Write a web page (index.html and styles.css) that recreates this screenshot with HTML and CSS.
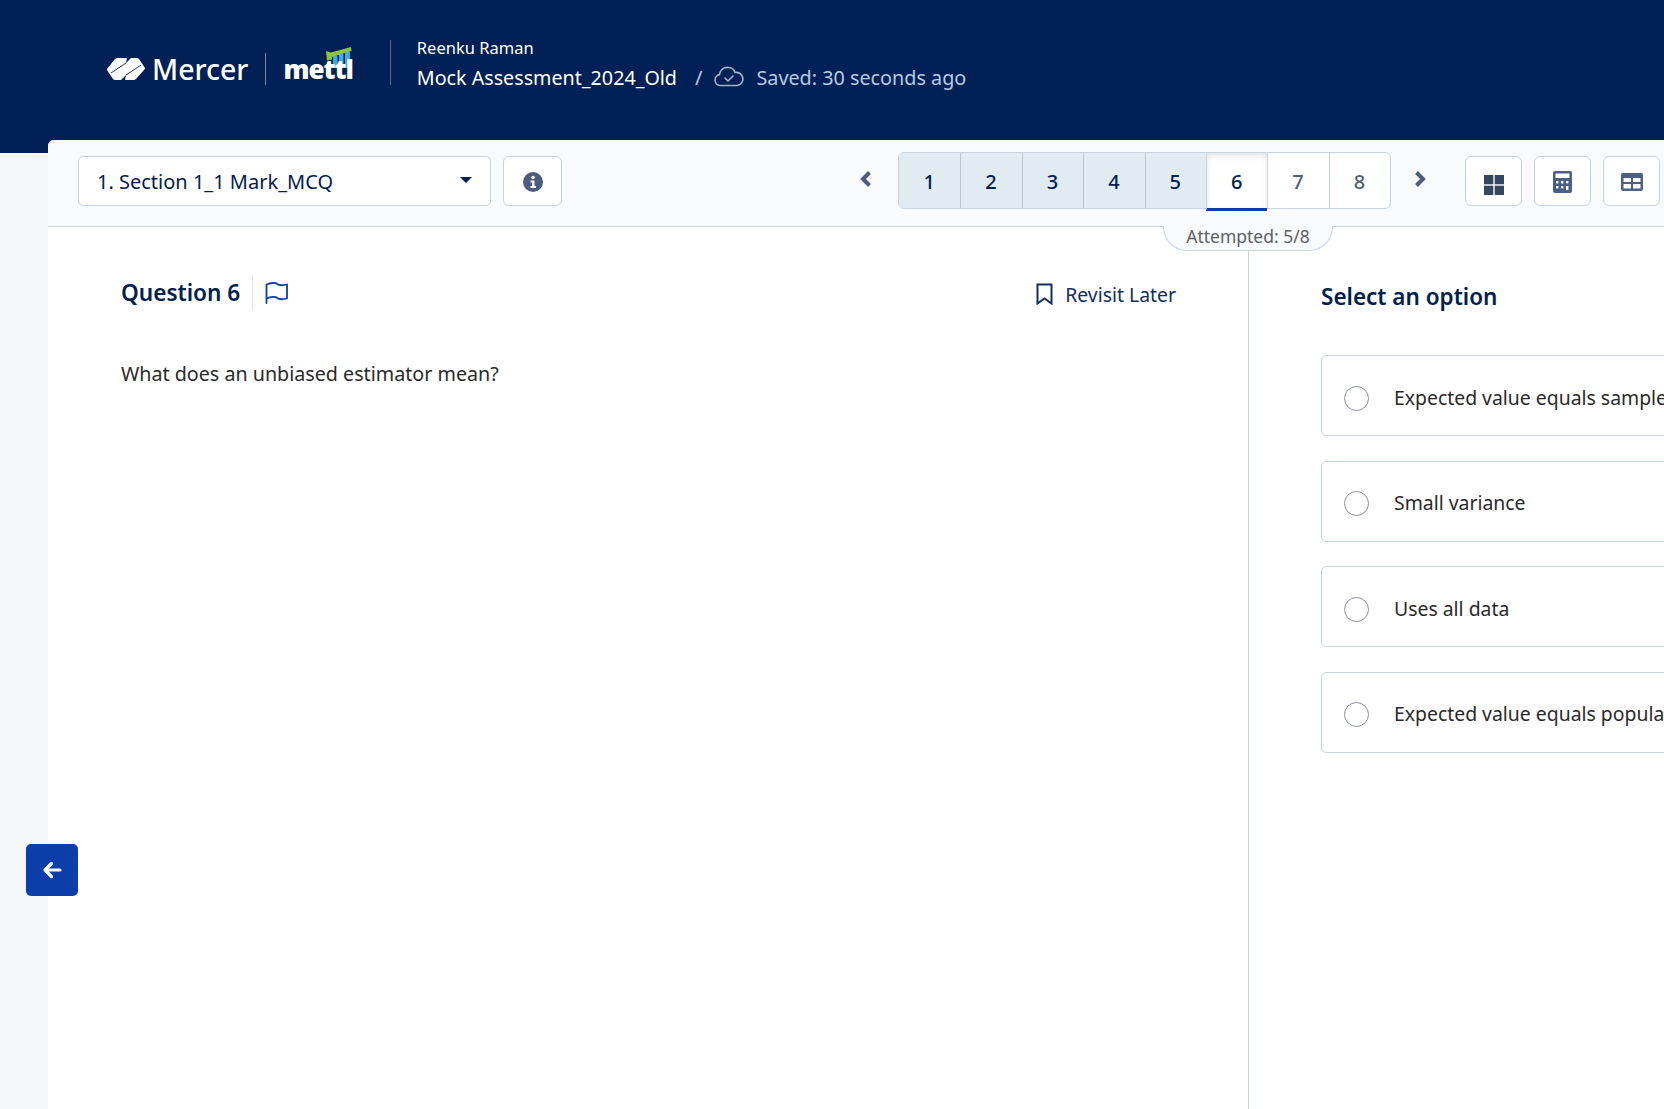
FILE: index.html
```html
<!DOCTYPE html>
<html lang="en">
<head>
    <meta charset="UTF-8">
    <meta name="viewport" content="width=device-width, initial-scale=1.0">
    <title>Mock Assessment_2024_Old</title>
    <link rel="stylesheet" href="styles.css">
</head>
<body>
    <header class="topbar">
        <div class="brand">
            <svg class="mercer-mark" viewBox="0 0 38 22" width="38" height="22">
                <path fill="#fff" d="M0 11 8 1Q9 0 11 0H20L19 5 24 0H30Q31 0 32 1L38 10Q38 11 37 12L29 21Q28 22 26 22H18L19 17 14 22H8Q7 22 6 21L0 12Z"/>
                <path fill="none" stroke="#002056" stroke-width="0.9" d="M4 15 19 5M34 7 19 17"/>
            </svg>
            <span class="mercer-name">Mercer</span>
            <span class="brand-sep"></span>
            <span class="mettl">
                <svg class="mettl-bars" viewBox="0 0 26 21" width="26" height="21">
                    <rect x="7" y="9" width="4.500" height="12" fill="#3fa9e0"/>
                    <rect x="13" y="7" width="4.500" height="14" fill="#3fa9e0"/>
                    <rect x="19" y="5" width="5" height="16" fill="#3fa9e0"/>
                    <path fill="#8cc540" d="M0 4 5 5.500 25 0 25.500 4 6 10 6 12.500 1 13.500Z"/>
                </svg>
                <span class="mettl-name">mettl</span>
            </span>
        </div>
        <div class="test-info">
            <div class="user-name">Reenku Raman</div>
            <div class="test-line">
                <span class="test-name">Mock Assessment_2024_Old</span>
                <span class="slash">/</span>
                <svg class="cloud" viewBox="0 0 30 22" width="30" height="22" fill="none" stroke="#a3b5c9" stroke-width="1.6" stroke-linecap="round" stroke-linejoin="round">
                    <path d="M7 20.500H6.500A5.500 5.500 0 0 1 5.500 9.600 8 8 0 0 1 15 2.500 7 7 0 0 1 21 7.500 6.500 6.500 0 0 1 23.500 20.500Z"/>
                    <path d="m11 13 3 3 5-5"/>
                </svg>
                <span class="saved">Saved: 30 seconds ago</span>
            </div>
        </div>
    </header>

    <main class="card">
        <div class="toolbar">
            <div class="section-select">
                <span>1. Section 1_1 Mark_MCQ</span>
                <span class="caret"></span>
            </div>
            <button class="icon-btn info-btn">
                <svg viewBox="0 0 20 20" width="20" height="20">
                    <circle cx="10" cy="10" r="10" fill="#4c5c7d"/>
                    <circle cx="10" cy="5.500" r="1.800" fill="#fff"/>
                    <path fill="#fff" d="M7.500 8.500H11.500V14H13V16H7.500V14H9V10.500H7.500Z"/>
                </svg>
            </button>
            <div class="pager-wrap">
                <svg class="chevron" viewBox="0 0 12 18" width="12" height="18"><path d="M9.500 2.500 3 9l6.500 6.500" fill="none" stroke="#4c5c7d" stroke-width="4"/></svg>
                <div class="pager">
                    <span class="page done">1</span>
                    <span class="page done">2</span>
                    <span class="page done">3</span>
                    <span class="page done">4</span>
                    <span class="page done">5</span>
                    <span class="page current">6</span>
                    <span class="page">7</span>
                    <span class="page">8</span>
                </div>
                <svg class="chevron" viewBox="0 0 12 18" width="12" height="18"><path d="M2.500 2.500 9 9l-6.500 6.500" fill="none" stroke="#4c5c7d" stroke-width="4"/></svg>
            </div>
            <div class="tools">
                <button class="icon-btn tool-btn grid-btn">
                    <svg viewBox="0 0 20 20" width="20" height="20" fill="#33475f">
                        <rect x="0" y="0" width="9.300" height="9.300"/>
                        <rect x="10.700" y="0" width="9.300" height="9.300"/>
                        <rect x="0" y="10.700" width="9.300" height="9.300"/>
                        <rect x="10.700" y="10.700" width="9.300" height="9.300"/>
                    </svg>
                </button>
                <button class="icon-btn tool-btn">
                    <svg viewBox="0 0 19 22" width="19" height="22">
                        <rect width="19" height="22" rx="2" fill="#4a5f85"/>
                        <rect x="2.500" y="2.500" width="14" height="4.500" fill="#fff"/>
                        <g fill="#fff">
                            <rect x="3" y="10" width="2.400" height="2.400"/>
                            <rect x="8" y="10" width="2.400" height="2.400"/>
                            <rect x="13" y="10" width="2.400" height="2.400"/>
                            <rect x="3" y="15" width="2.400" height="2.400"/>
                            <rect x="8" y="15" width="2.400" height="2.400"/>
                            <rect x="13" y="15" width="2.400" height="4"/>
                        </g>
                    </svg>
                </button>
                <button class="icon-btn tool-btn">
                    <svg viewBox="0 0 22 18" width="22" height="18">
                        <rect width="22" height="18" rx="2" fill="#4a5f85"/>
                        <rect x="2.500" y="5" width="7.500" height="4" fill="#fff"/>
                        <rect x="12" y="5" width="7.500" height="4" fill="#fff"/>
                        <rect x="2.500" y="11" width="7.500" height="4.500" fill="#fff"/>
                        <rect x="12" y="11" width="7.500" height="4.500" fill="#fff"/>
                    </svg>
                </button>
            </div>
            <div class="attempted">Attempted: 5/8</div>
        </div>

        <div class="content">
            <section class="question">
                <div class="question-head">
                    <h2 class="question-title">Question 6</h2>
                    <span class="head-sep"></span>
                    <svg class="flag" viewBox="0 0 23 22" width="23" height="22" fill="none" stroke="#0b3ea8" stroke-width="1.800" stroke-linejoin="round" stroke-linecap="round">
                        <path d="M1.500 21V2.500C7 .5 11 .5 12 2c2 1.500 6 1.500 10 .5v14c-4 1-8 1-10-.5-1-1.500-6-1.500-10.500.5"/>
                    </svg>
                    <div class="revisit">
                        <svg viewBox="0 0 17 22" width="17" height="22" fill="none" stroke="#12305f" stroke-width="2">
                            <path d="M1.500 1.500h14v19l-7-5-7 5Z"/>
                        </svg>
                        <span>Revisit Later</span>
                    </div>
                </div>
                <p class="question-text">What does an unbiased estimator mean?</p>
            </section>

            <section class="answers">
                <h3 class="answers-title">Select an option</h3>
                <div class="option"><span class="radio"></span><span>Expected value equals sample mean</span></div>
                <div class="option"><span class="radio"></span><span>Small variance</span></div>
                <div class="option"><span class="radio"></span><span>Uses all data</span></div>
                <div class="option"><span class="radio"></span><span>Expected value equals population mean</span></div>
            </section>
        </div>
    </main>

    <button class="side-toggle">
        <svg viewBox="0 0 20 18" width="20" height="18" fill="none" stroke="#fff" stroke-width="3.200" stroke-linecap="round" stroke-linejoin="round">
            <path d="M18 9H3M9.500 2.500 3 9l6.500 6.500"/>
        </svg>
    </button>
</body>
</html>
```

FILE: styles.css
```css
* {
    box-sizing: border-box;
}
html, body {
    height: 100%;
}
body {
    margin: 0;
    overflow: hidden;
    background-color: #f4f6f8;
    color: #002050;
    font-family: "Noto Sans", sans-serif;
    position: relative;
}
button {
    font: inherit;
    cursor: pointer;
}

/* top bar */
.topbar {
    height: 153px;
    padding: 37px 0 0 107px;
    display: flex;
    align-items: flex-start;
    background-color: #002056;
    color: white;
}
.brand {
    height: 48px;
    display: flex;
    align-items: center;
    padding-top: 16px;
}
.mercer-mark {
    margin-right: 7px;
}
.mercer-name {
    font-size: 28.500px;
    font-weight: 500;
    line-height: 30px;
}
.brand-sep {
    width: 1px;
    height: 32px;
    margin: 0 17px;
    background-color: #74869f;
}
.mettl {
    position: relative;
    display: block;
}
.mettl-name {
    position: relative;
    font-family: "Open Sans", sans-serif;
    font-size: 26px;
    font-weight: 800;
    letter-spacing: -1px;
    line-height: 28px;
    display: block;
}
.mettl-bars {
    position: absolute;
    right: 1px;
    top: -8px;
}
.test-info {
    margin: 3px 0 0 37px;
    padding-left: 26px;
    height: 45px;
    border-left: 1px solid #566a88;
}
.user-name {
    font-size: 16.500px;
    line-height: 22px;
    margin-top: -3px;
}
.test-line {
    display: flex;
    align-items: center;
    height: 30px;
    margin-top: 3px;
    white-space: nowrap;
}
.test-name {
    font-size: 19.700px;
}
.slash {
    font-size: 20px;
    color: #b5cbe4;
    margin: 0 12px 0 18px;
}
.cloud {
    margin-right: 12px;
    margin-top: -3px;
}
.saved {
    font-size: 19.800px;
    color: #b5cbe4;
}

/* white card */
.card {
    position: absolute;
    top: 140px;
    left: 48px;
    width: 1700px;
    bottom: 0;
    background-color: white;
    border-top-left-radius: 6px;
    display: flex;
    flex-direction: column;
}
.toolbar {
    height: 87px;
    flex-shrink: 0;
    padding: 12px 0 0 30px;
    display: flex;
    align-items: flex-start;
    background-color: #f8fafc;
    border-bottom: 1px solid #c8d4df;
    border-top-left-radius: 6px;
    position: relative;
}
.section-select {
    width: 413px;
    height: 50px;
    margin-top: 4px;
    padding: 1px 18px 0 18px;
    display: flex;
    align-items: center;
    justify-content: space-between;
    background-color: white;
    border: 1px solid #c8d4df;
    border-radius: 5px;
    font-size: 20px;
}
.caret {
    width: 0;
    height: 0;
    margin-top: -4px;
    border-left: 6px solid transparent;
    border-right: 6px solid transparent;
    border-top: 6px solid #002050;
}
.icon-btn {
    padding: 0;
    display: flex;
    align-items: center;
    justify-content: center;
    background-color: white;
    border: 1px solid #c8d4df;
    border-radius: 6px;
}
.info-btn {
    width: 59px;
    height: 50px;
    margin: 4px 0 0 12px;
    padding-top: 1px;
}
.pager-wrap {
    margin-left: 298px;
    display: flex;
    align-items: flex-start;
}
.chevron {
    margin-top: 18px;
}
.pager {
    display: flex;
    height: 57px;
    margin: 0 23px 0 26px;
    background-color: white;
    border: 1px solid #c8d4df;
    border-radius: 6px;
}
.page {
    width: 61.400px;
    padding: 1px 1px 0 0;
    display: flex;
    align-items: center;
    justify-content: center;
    border-left: 1px solid #c8d4df;
    font-size: 20px;
    font-weight: 500;
    color: #4c5c7d;
}
.page:first-child {
    border-left: 0;
    border-radius: 5px 0 0 5px;
}
.page.done {
    background-color: #e1ebf2;
    color: #002050;
}
.page.done + .page.done {
    border-left-color: #b9c6d2;
}
.page.current {
    color: #002050;
    border-bottom: 3px solid #0b3ea8;
    height: 58px;
    box-shadow: inset 0 3px 6px rgba(0, 0, 0, 0.1);
}
.tools {
    display: flex;
    gap: 12px;
    margin: 4px 0 0 39px;
}
.tool-btn {
    width: 57px;
    height: 50px;
    padding-top: 2px;
}
.grid-btn {
    padding-top: 8px;
}
.attempted {
    position: absolute;
    top: 86px;
    left: 1115px;
    width: 170px;
    height: 25px;
    text-align: center;
    background-color: #f8fafc;
    border: 1px solid #c8d4df;
    border-top: 0;
    border-radius: 0 0 24px 24px;
    font-size: 17.500px;
    line-height: 20px;
    color: #5d6165;
    white-space: nowrap;
}

/* body */
.content {
    flex: 1;
    display: flex;
}
.question {
    width: 1201px;
    flex-shrink: 0;
    padding: 47px 72px 0 73px;
    border-right: 1px solid #c8d4df;
}
.question-head {
    height: 36px;
    display: flex;
    align-items: center;
}
.question-title {
    margin: 0;
    font-size: 22.600px;
    font-weight: 600;
}
.head-sep {
    width: 1px;
    height: 35px;
    margin: 0 12px;
    background-color: #dfe5ea;
}
.flag {
    margin-top: 1px;
}
.revisit {
    margin: 4px 0 0 auto;
    display: flex;
    align-items: center;
    gap: 12px;
    font-size: 19.400px;
    color: #12305f;
}
.question-text {
    margin: 50px 0 0;
    font-size: 19.700px;
    color: #2a2a2a;
}
.answers {
    padding: 54px 0 0 72px;
    flex: 1;
}
.answers-title {
    margin: 0 0 42px;
    font-size: 22.500px;
    font-weight: 600;
    line-height: 32px;
}
.option {
    height: 81px;
    margin-bottom: 24.500px;
    padding: 3px 0 0 22px;
    display: flex;
    align-items: center;
    gap: 25px;
    border: 1px solid #c8d4df;
    border-radius: 5px;
    font-size: 19.400px;
    color: #2a2a2a;
    white-space: nowrap;
}
.radio {
    flex-shrink: 0;
    width: 25px;
    height: 25px;
    margin-top: 2px;
    border: 1px solid #8b929a;
    border-radius: 50%;
    background-color: white;
}

/* sidebar handle, sits over the card edge */
.side-toggle {
    position: absolute;
    left: 26px;
    top: 844px;
    width: 52px;
    height: 52px;
    padding: 0;
    display: flex;
    align-items: center;
    justify-content: center;
    background-color: #0b3ea8;
    border: 0;
    border-radius: 5px;
}
```
